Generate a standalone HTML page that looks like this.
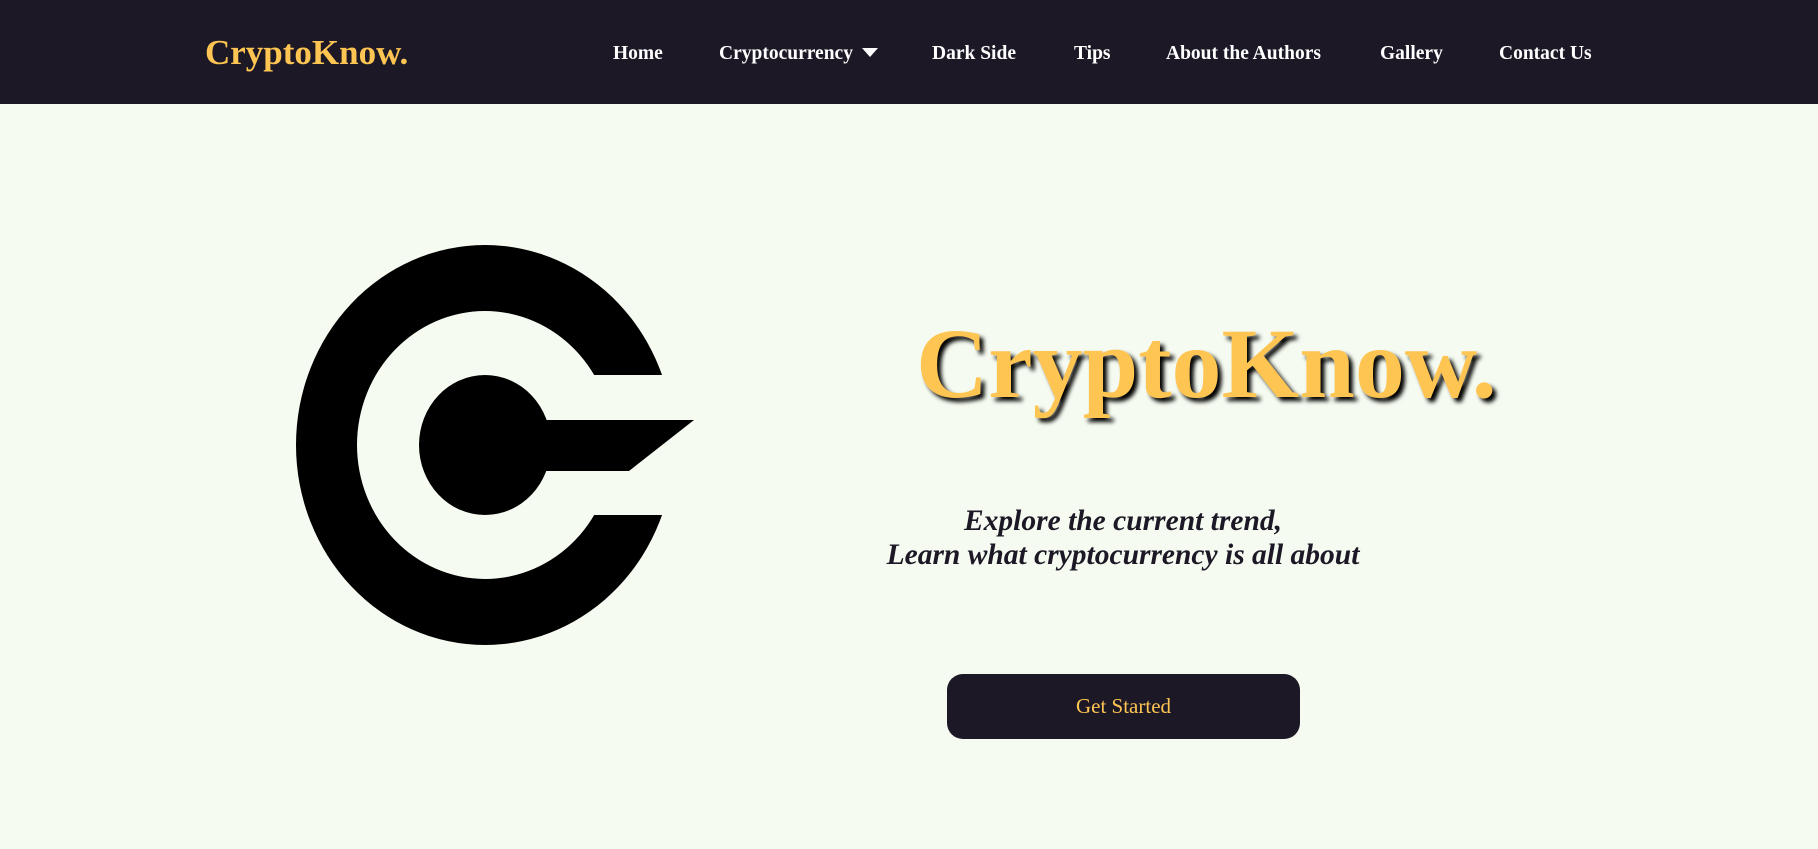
<!DOCTYPE html>
<html><head><meta charset="utf-8"><style>
*{margin:0;padding:0;box-sizing:border-box}
body{width:1818px;height:849px;background:#f5fbf0;font-family:"Liberation Serif",serif;position:relative;overflow:hidden}
nav{position:absolute;left:0;top:0;width:1818px;height:104px;background:#1c1826}
.logo{position:absolute;left:205px;top:33px;font-size:35px;font-weight:bold;color:#fec553;line-height:40px}
.n{position:absolute;top:43px;font-size:19.5px;font-weight:bold;color:#fff;line-height:22px;white-space:nowrap}
.tri{position:absolute;left:862px;top:48px;width:0;height:0;border-left:8px solid transparent;border-right:8px solid transparent;border-top:9px solid #fff}
h1{position:absolute;left:916px;top:309px;font-size:100px;font-weight:bold;color:#fec553;line-height:110px;text-shadow:4px 4px 4px #000;white-space:nowrap}
.sub{position:absolute;left:773px;width:700px;top:504px;text-align:center;font-size:29.5px;font-weight:bold;font-style:italic;color:#1c1826;line-height:34px}
.btn{position:absolute;left:947px;top:674px;width:353px;height:65px;border-radius:16px;background:#1c1826;color:#fec553;font-size:21px;text-align:center;line-height:65px}
</style></head><body>
<nav>
<div class="logo">CryptoKnow.</div>
<div class="n" style="left:613px">Home</div>
<div class="n" style="left:719px">Cryptocurrency</div>
<div class="tri"></div>
<div class="n" style="left:932px">Dark Side</div>
<div class="n" style="left:1074px">Tips</div>
<div class="n" style="left:1166px">About the Authors</div>
<div class="n" style="left:1380px">Gallery</div>
<div class="n" style="left:1499px">Contact Us</div>
</nav>
<svg style="position:absolute;left:0;top:0" width="900" height="849">
<path fill-rule="evenodd" fill="#000" d="M296,445 a189,200 0 1,0 378,0 a189,200 0 1,0 -378,0 Z M357,445 a128,134 0 1,0 256,0 a128,134 0 1,0 -256,0 Z"/>
<rect x="594" y="375" width="150" height="140" fill="#f5fbf0"/>
<ellipse cx="485" cy="445" rx="66" ry="70" fill="#000"/>
<polygon points="540,420 694,420 629,471 540,471" fill="#000"/>
</svg>
<h1>CryptoKnow.</h1>
<div class="sub">Explore the current trend,<br>Learn what cryptocurrency is all about</div>
<div class="btn">Get Started</div>
</body></html>
